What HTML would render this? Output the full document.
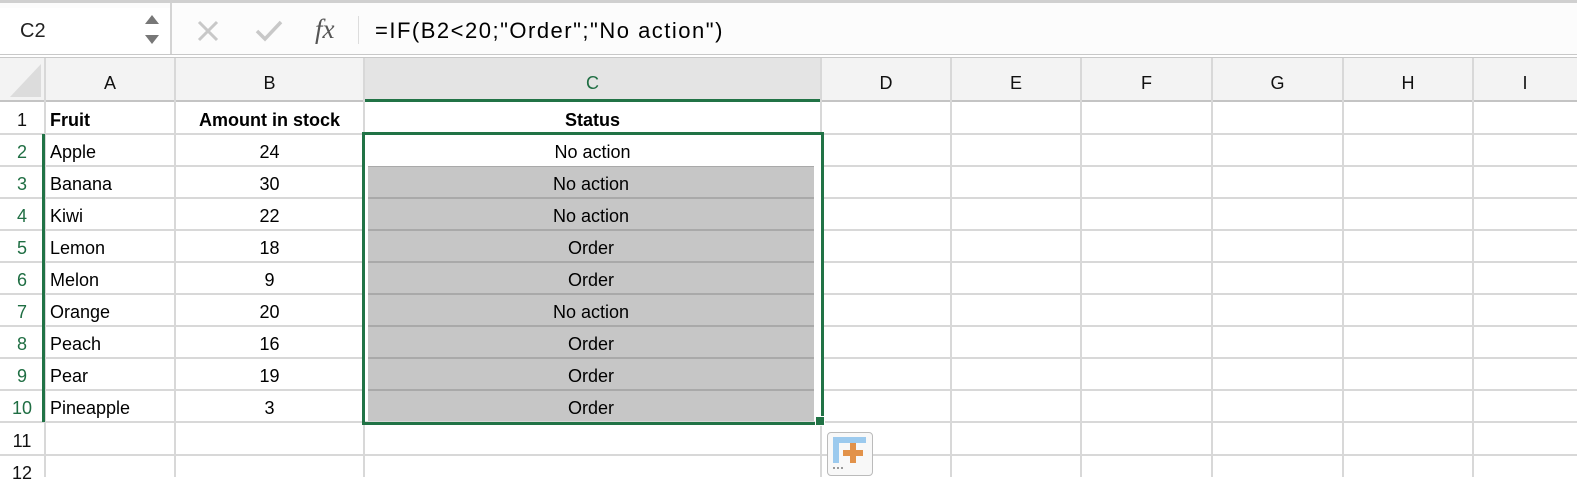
<!DOCTYPE html>
<html><head><style>
body{margin:0;width:1577px;height:477px;overflow:hidden;background:#fff;font-family:"Liberation Sans",sans-serif;position:relative}
.a{position:absolute}
.tb{left:0;top:0;width:1577px;height:55px;background:#fcfcfc;border-top:3px solid #d0d0d0;box-sizing:border-box}
.hl{height:1px;background:#c8c8c8}
.ch{top:58px;height:43px;background:#f3f3f3;font-size:18px;line-height:50px;text-align:center;color:#111}
.v{width:2px;background:#d8d8d8}
.h{height:2px;background:#d8d8d8;left:0;width:1577px}
.rn{left:0;width:44px;text-align:center;font-size:18px;color:#111;height:32px;line-height:37px}
.c{font-size:18px;height:32px;line-height:37px;color:#000;white-space:nowrap}
.g{background:#c6c6c6;left:368px;width:446px;height:30px;text-align:center;font-size:18px;line-height:35px;color:#000}
</style></head><body>
<div class="a tb"></div>
<div class="a" style="left:0;top:8px;width:170px;height:46px;background:#fff"></div>
<div class="a" style="left:20px;top:20px;font-size:20px;color:#222">C2</div>
<svg class="a" style="left:142px;top:12px" width="20" height="36"><path d="M3 12 L10 3 L17 12Z M3 23 L17 23 L10 32Z" fill="#777"/></svg>
<div class="a" style="left:170px;top:3px;width:2px;height:52px;background:#d4d4d4"></div>
<svg class="a" style="left:196px;top:19px" width="26" height="24"><path d="M3 3L21 21M21 3L3 21" stroke="#c8c8c8" stroke-width="3"/></svg>
<svg class="a" style="left:254px;top:19px" width="30" height="24"><path d="M3 12L11 20L27 3" stroke="#c8c8c8" stroke-width="3.5" fill="none"/></svg>
<div class="a" style="left:315px;top:14px;font-family:'Liberation Serif',serif;font-style:italic;font-size:27px;color:#555">fx</div>
<div class="a" style="left:358px;top:16px;width:1px;height:28px;background:#ddd"></div>
<div class="a" style="left:375px;top:18px;font-size:22px;letter-spacing:1.5px;color:#000;white-space:nowrap">=IF(B2&lt;20;"Order";"No action")</div>
<div class="a hl" style="left:0;top:54px;width:1577px"></div>
<div class="a hl" style="left:0;top:57px;width:1577px"></div>
<div class="a ch" style="left:0;width:1577px"></div>
<div class="a" style="left:364px;top:58px;width:457px;height:43px;background:#e4e4e4"></div>
<svg class="a" style="left:10px;top:64px" width="32" height="34"><path d="M31 0L31 33L0 33Z" fill="#dcdcdc"/></svg>
<div class="a ch" style="left:45px;width:130px;background:none">A</div>
<div class="a ch" style="left:175px;width:189px;background:none">B</div>
<div class="a ch" style="left:364px;width:457px;background:none;color:#1f6e43">C</div>
<div class="a ch" style="left:821px;width:130px;background:none">D</div>
<div class="a ch" style="left:951px;width:130px;background:none">E</div>
<div class="a ch" style="left:1081px;width:131px;background:none">F</div>
<div class="a ch" style="left:1212px;width:131px;background:none">G</div>
<div class="a ch" style="left:1343px;width:130px;background:none">H</div>
<div class="a ch" style="left:1473px;width:104px;background:none">I</div>
<div class="a h" style="top:100px;background:#c4c4c4"></div>
<div class="a" style="left:364px;top:99px;width:457px;height:3px;background:#217346"></div>
<div class="a v" style="left:44px;top:58px;height:419px"></div>
<div class="a v" style="left:174px;top:58px;height:419px"></div>
<div class="a v" style="left:363px;top:58px;height:419px"></div>
<div class="a v" style="left:820px;top:58px;height:419px"></div>
<div class="a v" style="left:950px;top:58px;height:419px"></div>
<div class="a v" style="left:1080px;top:58px;height:419px"></div>
<div class="a v" style="left:1211px;top:58px;height:419px"></div>
<div class="a v" style="left:1342px;top:58px;height:419px"></div>
<div class="a v" style="left:1472px;top:58px;height:419px"></div>
<div class="a h" style="top:133px"></div><div class="a h" style="top:165px"></div><div class="a h" style="top:197px"></div><div class="a h" style="top:229px"></div><div class="a h" style="top:261px"></div><div class="a h" style="top:293px"></div><div class="a h" style="top:325px"></div><div class="a h" style="top:357px"></div><div class="a h" style="top:389px"></div><div class="a h" style="top:421px"></div><div class="a h" style="top:454px"></div>
<div class="a rn" style="top:102px">1</div>
<div class="a rn" style="top:134px;color:#1f6e43">2</div>
<div class="a rn" style="top:166px;color:#1f6e43">3</div>
<div class="a rn" style="top:198px;color:#1f6e43">4</div>
<div class="a rn" style="top:230px;color:#1f6e43">5</div>
<div class="a rn" style="top:262px;color:#1f6e43">6</div>
<div class="a rn" style="top:294px;color:#1f6e43">7</div>
<div class="a rn" style="top:326px;color:#1f6e43">8</div>
<div class="a rn" style="top:358px;color:#1f6e43">9</div>
<div class="a rn" style="top:390px;color:#1f6e43">10</div>
<div class="a rn" style="top:423px">11</div>
<div class="a rn" style="top:455px">12</div>
<div class="a" style="left:42px;top:134px;width:3px;height:288px;background:#217346"></div>
<div class="a c" style="left:50px;top:102px;font-weight:bold">Fruit</div>
<div class="a c" style="left:175px;width:189px;text-align:center;top:102px;font-weight:bold">Amount in stock</div>
<div class="a c" style="left:364px;width:457px;text-align:center;top:102px;font-weight:bold">Status</div>
<div class="a c" style="left:50px;top:134px">Apple</div><div class="a c" style="left:175px;width:189px;text-align:center;top:134px">24</div>
<div class="a c" style="left:50px;top:166px">Banana</div><div class="a c" style="left:175px;width:189px;text-align:center;top:166px">30</div>
<div class="a c" style="left:50px;top:198px">Kiwi</div><div class="a c" style="left:175px;width:189px;text-align:center;top:198px">22</div>
<div class="a c" style="left:50px;top:230px">Lemon</div><div class="a c" style="left:175px;width:189px;text-align:center;top:230px">18</div>
<div class="a c" style="left:50px;top:262px">Melon</div><div class="a c" style="left:175px;width:189px;text-align:center;top:262px">9</div>
<div class="a c" style="left:50px;top:294px">Orange</div><div class="a c" style="left:175px;width:189px;text-align:center;top:294px">20</div>
<div class="a c" style="left:50px;top:326px">Peach</div><div class="a c" style="left:175px;width:189px;text-align:center;top:326px">16</div>
<div class="a c" style="left:50px;top:358px">Pear</div><div class="a c" style="left:175px;width:189px;text-align:center;top:358px">19</div>
<div class="a c" style="left:50px;top:390px">Pineapple</div><div class="a c" style="left:175px;width:189px;text-align:center;top:390px">3</div>
<div class="a" style="left:364px;top:135px;width:457px;height:286px;background:#fff"></div>
<div class="a c" style="left:364px;width:457px;text-align:center;top:134px">No action</div>
<div class="a" style="left:368px;top:166px;width:446px;height:253px;background:#a9a9a9"></div>
<div class="a g" style="top:167px">No action</div>
<div class="a g" style="top:199px">No action</div>
<div class="a g" style="top:231px">Order</div>
<div class="a g" style="top:263px">Order</div>
<div class="a g" style="top:295px">No action</div>
<div class="a g" style="top:327px">Order</div>
<div class="a g" style="top:359px">Order</div>
<div class="a g" style="top:391px">Order</div>
<div class="a" style="left:362px;top:132px;width:456px;height:287px;border:3px solid #217346"></div>
<div class="a" style="left:815px;top:416px;width:8px;height:8px;background:#217346;border:1px solid #fff"></div>
<div class="a" style="left:827px;top:432px;width:44px;height:42px;border:1px solid #bbb;border-radius:4px;background:#f8f8f8"></div>
<div class="a" style="left:833px;top:437px;width:33px;height:6px;background:#9ccaee"></div>
<div class="a" style="left:833px;top:437px;width:6px;height:26px;background:#9ccaee"></div>
<div class="a" style="left:843px;top:450px;width:20px;height:6px;background:#e2924a"></div>
<div class="a" style="left:850px;top:443px;width:6px;height:20px;background:#e2924a"></div>
<div class="a" style="left:833px;top:467px;width:10px;height:2px;border-top:2px dotted #999"></div>
</body></html>
